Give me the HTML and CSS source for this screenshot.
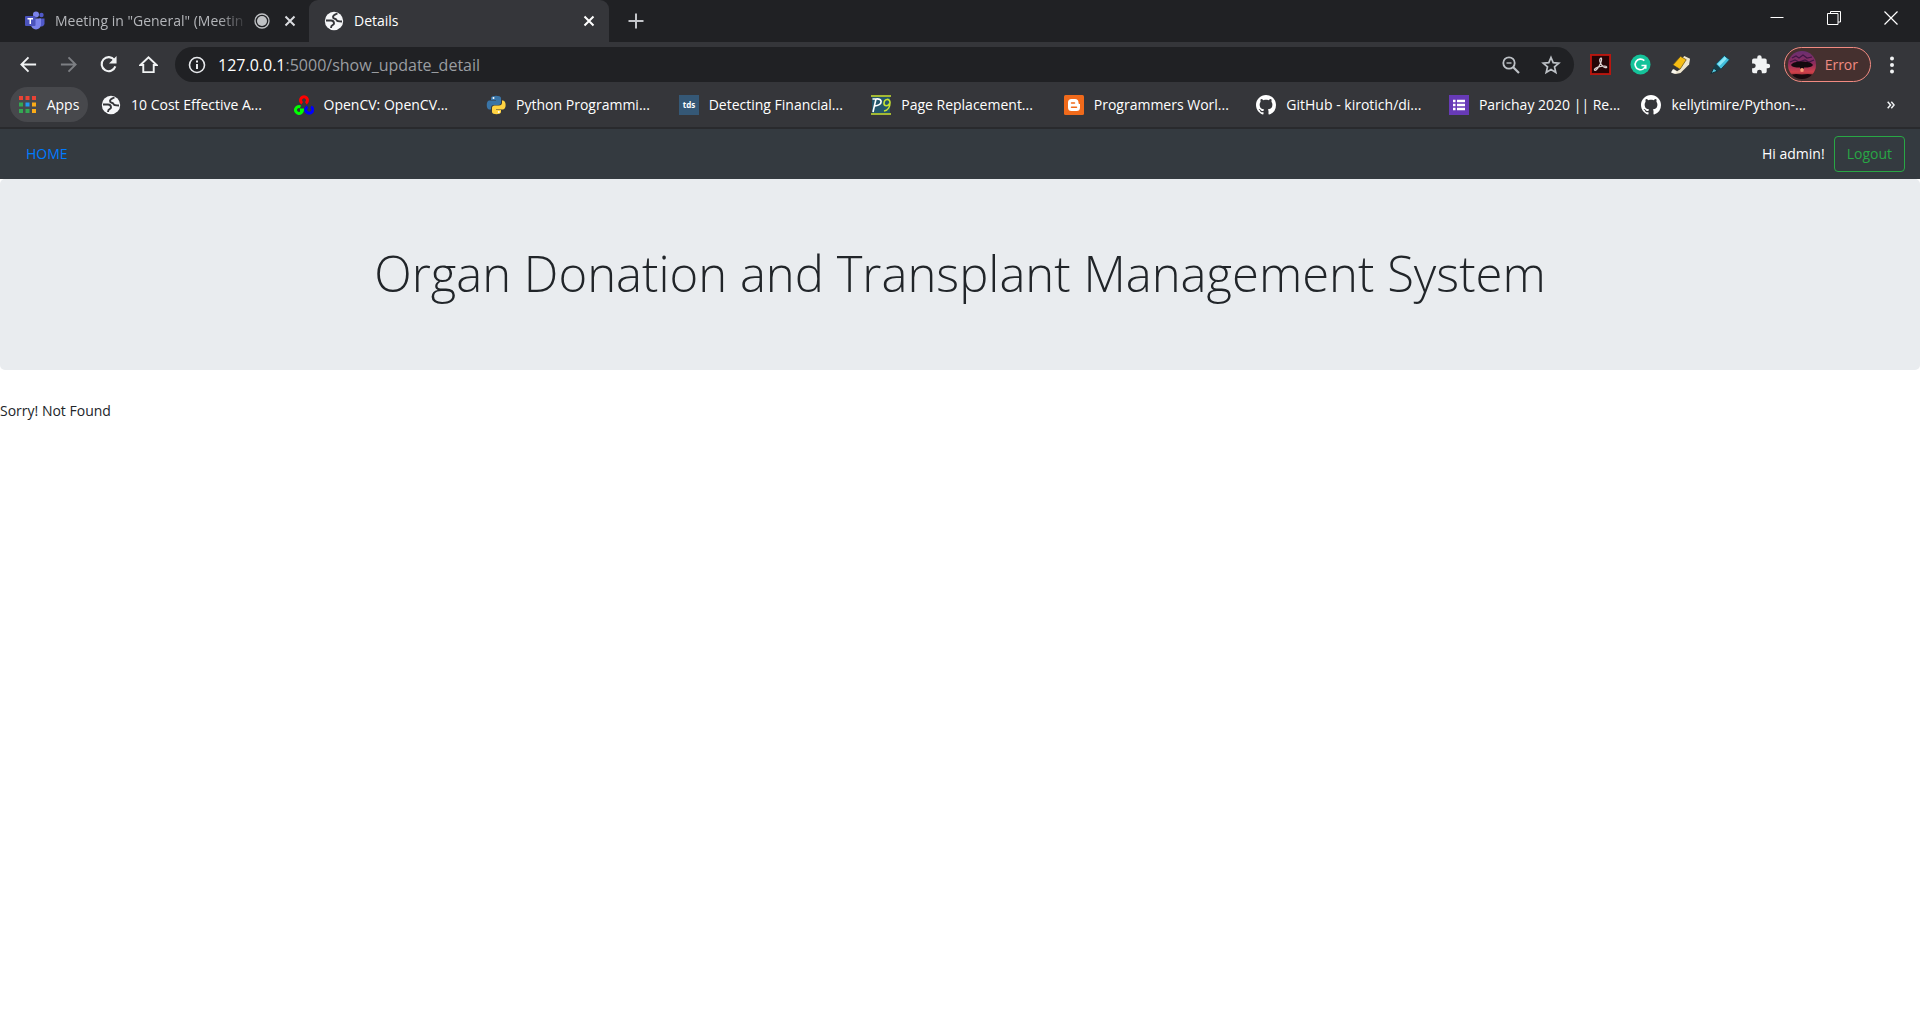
FILE: index.html
```html
<!DOCTYPE html>
<html lang="en">
<head>
<meta charset="utf-8">
<title>Details</title>
<link rel="stylesheet" href="styles.css">
</head>
<body>
<svg class="defs" width="0" height="0" aria-hidden="true">
  <symbol id="globe" viewBox="0 0 20 20"><circle cx="10" cy="10" r="9.200" fill="#f5f6f8"/><path d="M13.500 2.500C10 4 9 4 9 6c0 2.500 3 1 3.500 3 .3 1.500 2 1.500 5.500 1.500" fill="none" stroke="#35363a" stroke-width="1.900"/><path d="M2 9.500h5c2 0 3 1 3 3s-3 .5-3 4.500" fill="none" stroke="#35363a" stroke-width="1.900"/></symbol>
  <symbol id="github" viewBox="0 0 16 16"><path fill="#fff" d="M8 0C3.580 0 0 3.580 0 8c0 3.540 2.290 6.530 5.470 7.590.4.070.55-.17.55-.38 0-.19-.01-.82-.01-1.490-2.010.37-2.530-.49-2.690-.94-.09-.23-.48-.94-.82-1.130-.28-.15-.68-.52-.01-.53.63-.01 1.080.58 1.230.82.72 1.210 1.870.87 2.330.66.070-.52.280-.87.510-1.070-1.780-.2-3.640-.89-3.640-3.950 0-.87.310-1.590.82-2.150-.08-.2-.36-1.020.08-2.120 0 0 .67-.21 2.200.82.640-.18 1.320-.27 2-.27s1.360.09 2 .27c1.530-1.040 2.200-.82 2.200-.82.440 1.100.160 1.920.080 2.120.510.560.820 1.270.820 2.150 0 3.070-1.870 3.750-3.650 3.950.290.250.540.730.540 1.480 0 1.070-.01 1.930-.01 2.200 0 .21.150.46.550.38A8.010 8.010 0 0 0 16 8c0-4.420-3.580-8-8-8z"/></symbol>
</svg>

<header class="browser">
  <div class="tabstrip">
    <div class="tab">
      <svg class="icon" viewBox="0 0 20 20"><circle cx="16.500" cy="4" r="2.200" fill="#5059c9"/><circle cx="11" cy="3.500" r="3" fill="#7b83eb"/><path d="M14 7.500h5.500v5.500a3 3 0 0 1-5.500 1z" fill="#5059c9"/><path d="M6 7.500h10v6a5 5 0 0 1-10 0z" fill="#7b83eb"/><rect y="5" width="10.500" height="10" rx="1" fill="#4b53bc"/><path d="M2.500 7.700h5.500M5.250 7.700v5.300" stroke="#fff" stroke-width="1.500"/></svg>
      <span class="tab-title fade">Meeting in "General" (Meetin</span>
      <svg class="record" viewBox="0 0 16 16"><circle cx="8" cy="8" r="7" fill="none" stroke="#c0c2c5" stroke-width="1.300"/><circle cx="8" cy="8" r="5" fill="#c0c2c5"/></svg>
      <button class="close" aria-label="Close tab"><svg viewBox="0 0 12 12"><path d="M1.500 1.500l9 9m0-9l-9 9" stroke="#dadce0" stroke-width="2"/></svg></button>
    </div>
    <div class="tab active">
      <svg class="icon"><use href="#globe"/></svg>
      <span class="tab-title">Details</span>
      <button class="close" aria-label="Close tab"><svg viewBox="0 0 12 12"><path d="M1.500 1.500l9 9m0-9l-9 9" stroke="#fff" stroke-width="2"/></svg></button>
    </div>
    <button class="new-tab" aria-label="New tab"><svg viewBox="0 0 16 16"><path d="M8 .5v15M.5 8h15" stroke="#c4c6ca" stroke-width="2"/></svg></button>
    <div class="window-controls">
      <button aria-label="Minimize"><svg viewBox="0 0 14 14"><path d="M.5 6.500h13" stroke="#fff"/></svg></button>
      <button aria-label="Restore"><svg viewBox="0 0 14 14"><path d="M.5 2.500h10.500v11H.5zM3.500 2.500v-2h10v10.500h-2.500" fill="none" stroke="#fff"/></svg></button>
      <button aria-label="Close"><svg viewBox="0 0 14 14"><path d="M.5.5l13 13m0-13l-13 13" stroke="#fff" stroke-width="1.200"/></svg></button>
    </div>
  </div>

  <div class="toolbar">
    <div class="nav-buttons">
      <button aria-label="Back"><svg viewBox="0 0 20 20"><path d="M18 10H3M10 2.500L2.500 10l7.500 7.500" fill="none" stroke="#f1f3f4" stroke-width="2"/></svg></button>
      <button aria-label="Forward"><svg viewBox="0 0 20 20"><path d="M2 10h15M10 2.500l7.500 7.500-7.500 7.500" fill="none" stroke="#7d7f83" stroke-width="2"/></svg></button>
      <button aria-label="Reload"><svg viewBox="0 0 20 20"><path d="M16.200 5.300A7.400 7.400 0 1 0 17.200 12" fill="none" stroke="#f1f3f4" stroke-width="2.200"/><path d="M18.500 1v8h-8z" fill="#f1f3f4"/></svg></button>
      <button aria-label="Home"><svg viewBox="0 0 20 20"><path d="M1.500 10.500L10 2.500l8.500 8h-3V18h-11v-7.500z" fill="none" stroke="#f1f3f4" stroke-width="2"/></svg></button>
    </div>
    <form class="omnibox">
      <svg class="icon" viewBox="0 0 20 20"><circle cx="10" cy="10" r="7.500" fill="none" stroke="#e8eaed" stroke-width="1.600"/><path d="M10 9v5M10 5.500v2" stroke="#e8eaed" stroke-width="2"/></svg>
      <div class="url"><span class="host">127.0.0.1</span>:5000/show_update_detail</div>
      <button type="button" aria-label="Zoom"><svg viewBox="0 0 20 20"><circle cx="8" cy="8" r="5.700" fill="none" stroke="#bdc1c6" stroke-width="1.800"/><path d="M12 12l6 6" stroke="#bdc1c6" stroke-width="2.200"/><path d="M5.500 8h5" stroke="#bdc1c6" stroke-width="1.400"/></svg></button>
      <button type="button" aria-label="Bookmark this tab"><svg viewBox="0 0 20 20"><path d="M10 2.500l2.200 5.200 5.600.5-4.300 3.700 1.300 5.500L10 14.500l-4.800 2.900 1.300-5.500-4.300-3.700 5.600-.5z" fill="none" stroke="#bdc1c6" stroke-width="1.700"/></svg></button>
    </form>
    <div class="extensions">
      <button aria-label="Adobe Acrobat"><svg viewBox="0 0 22 22"><rect x="1" y="1" width="20" height="20" fill="#250507" stroke="#b9160f" stroke-width="2"/><path d="M5 17c-1.500-1 2-3 5-3.700s7-.8 7.500.3-3 1.200-5-1.600-3-6-1.500-7.500 1.500 2.500 0 5.500-4.500 8-6 7z" fill="none" stroke="#ddd3d3" stroke-width="1.300"/></svg></button>
      <button aria-label="Grammarly"><svg viewBox="0 0 22 22"><circle cx="11" cy="11" r="10.500" fill="#15c39a"/><path d="M15 7a5.600 5.600 0 1 0 1.500 5H12m4.500 0v3.500" fill="none" stroke="#fff" stroke-width="1.700"/></svg></button>
      <button aria-label="Highlighter"><svg viewBox="0 0 22 22"><path d="M2 20l2-5L15 2l6 3-1 6-9 9-5 1z" fill="#eee6cf"/><path d="M3 11.500L11 2.500l6 3.500-6.500 10z" fill="#f6bd13" stroke="#6b5417" stroke-width=".8"/><path d="M3 11.500L2.500 15l5 3 3-2z" fill="#353535"/><path d="M1 19.500l2-3.500 4 2.500-2 2z" fill="#faf8ef"/></svg></button>
      <button aria-label="Marker"><svg viewBox="0 0 22 22"><path d="M1 20.500l3-6 3.500 3.500z" fill="#54c5dc" stroke="#102d36"/><path d="M3 15l3-4.500 5.500 5L7.500 18z" fill="#163d48"/><path d="M6 10.500L15 1.500l5.500 4.500L11.500 16z" fill="#42bfdc" stroke="#123947"/><path d="M8 10.500L15.500 3l2 2L10 12.500z" fill="#8ce6f5"/></svg></button>
      <button aria-label="Extensions"><svg viewBox="0 0 22 22"><path d="M18.800 10.200h-1.300V6.500a1.800 1.800 0 0 0-1.800-1.800h-3.500V3.500a2.300 2.300 0 0 0-4.600 0v1.200H4a1.800 1.800 0 0 0-1.800 1.800v3.400h1.300a2.500 2.500 0 0 1 0 5H2.200v3.500A1.800 1.800 0 0 0 4 20.200h3.400v-1.300a2.500 2.500 0 0 1 5 0v1.300h3.300a1.800 1.800 0 0 0 1.800-1.800v-3.600h1.300a2.300 2.300 0 0 0 0-4.600z" fill="#f1f3f4"/></svg></button>
    </div>
    <button class="profile">
      <svg viewBox="0 0 28 28"><defs><clipPath id="avatar"><circle cx="14" cy="14" r="14"/></clipPath><linearGradient id="sky" x1="0" y1="0" x2="0" y2="1"><stop offset="0" stop-color="#6a2f72"/><stop offset=".45" stop-color="#8e2c5c"/><stop offset=".75" stop-color="#d2414a"/><stop offset="1" stop-color="#4a1522"/></linearGradient></defs><g clip-path="url(#avatar)"><path fill="url(#sky)" d="M0 0h28v28H0z"/><path d="M4 7l4-2 3 2 4-3 4 3 5-1M2 11l5-2 4 2 6-2 4 2 5-2" fill="none" stroke="#401744" stroke-width="1.200"/><path fill="#12090e" d="M3 14c2-3 6-3.500 11-3.500S23 11 25 14c-1 2-4 2.500-9 2.500V20h-4v-3.500c-5 0-8-.5-9-2.500z"/><circle cx="14" cy="19" r="2" fill="#ff9a78"/><path fill="#180a0e" d="M0 24l8-1 6 .5 6-.5 8 1v4H0z"/></g></svg>
      <span>Error</span>
    </button>
    <button class="menu" aria-label="Menu"><svg viewBox="0 0 6 18"><circle cx="3" cy="2.500" r="2" fill="#f1f3f4"/><circle cx="3" cy="9" r="2" fill="#f1f3f4"/><circle cx="3" cy="15.500" r="2" fill="#f1f3f4"/></svg></button>
  </div>

  <nav class="bookmarks" aria-label="Bookmarks">
    <a class="apps" href="#"><svg viewBox="0 0 17 17"><path fill="#ea4335" d="M0 0h4v4H0zM6.500 0h4v4h-4zM13 0h4v4h-4z"/><path fill="#34a853" d="M0 6.500h4v4H0zM0 13h4v4H0z"/><path fill="#2196f3" d="M6.500 6.500h4v4h-4z"/><path fill="#34a853" d="M6.500 13h4v4h-4z"/><path fill="#fbab17" d="M13 6.500h4v4h-4zM13 13h4v4h-4z"/></svg><span>Apps</span></a>
    <div class="bookmark-list">
      <a href="#"><svg class="icon"><use href="#globe"/></svg><span>10 Cost Effective A...</span></a>
      <a href="#"><svg class="icon" viewBox="0 0 20 20"><g fill="none" stroke-width="3"><path d="M8.200 8.200a3.500 3.500 0 1 1 3.600 0" stroke="#f00"/><path d="M6.500 11.800a3.500 3.500 0 1 0 2 3.200H6" stroke="#0f0"/><path d="M13.500 11.800a3.500 3.500 0 1 0 3.500 0" stroke="#00f"/></g></svg><span>OpenCV: OpenCV...</span></a>
      <a href="#"><svg class="icon" viewBox="0 0 20 20"><path d="M5 5V3c0-3 10-3 10 0v4.500c0 1.500-1 2.500-2.500 2.500H8c-2 0-3 1-3 3v1.500H3C0 14.500 0 5.500 3 5.500h7V5z" fill="#3974a6"/><path d="M15 15v2c0 3-9 3-9 0v-4c0-1.500 1-2.500 2.500-2.500H13c2 0 3-1 3-3V5.500h1c3.500 0 3.500 9 0 9h-7v.5z" fill="#ffd342"/><circle cx="7.500" cy="3" r="1" fill="#fff"/><circle cx="12.800" cy="17" r="1" fill="#fff"/></svg><span>Python Programmi...</span></a>
      <a href="#"><svg class="icon" viewBox="0 0 20 20"><path fill="#355876" d="M0 0h20v20H0z"/><text class="tds" x="10" y="13" text-anchor="middle">tds</text></svg><span>Detecting Financial...</span></a>
      <a href="#"><svg class="icon" viewBox="0 0 20 20"><path fill="#23566b" d="M1 2h18v16H1z"/><path d="M0 1h20M0 19h20" stroke="#c9e532" stroke-width="1.500"/><path d="M2 17L5 4H1.500M5 4c7-1 7 6-1 7" fill="none" stroke="#fff" stroke-width="1.600"/><path d="M18.500 8.500c-1 3-5.500 3-5.500 0 0-5 6-5.500 6-1 0 4-2 8-6 8.500" fill="none" stroke="#c9e532" stroke-width="1.600"/></svg><span>Page Replacement...</span></a>
      <a href="#"><svg class="icon" viewBox="0 0 20 20"><rect width="20" height="20" rx="1.500" fill="#f06a1b"/><path d="M7.500 4h3.500a3.500 3.500 0 0 1 3.500 3.500c0 1 .3 1.500 1.500 1.500v3.500a3.500 3.500 0 0 1-3.500 3.500h-5A3.500 3.500 0 0 1 4 12.500v-5A3.500 3.500 0 0 1 7.500 4z" fill="#fff"/><path d="M7.500 8h3M7.500 12.300h5" stroke="#f06a1b" stroke-width="1.500" stroke-linecap="round"/></svg><span>Programmers Worl...</span></a>
      <a href="#"><svg class="icon"><use href="#github"/></svg><span>GitHub - kirotich/di...</span></a>
      <a href="#"><svg class="icon" viewBox="0 0 20 20"><path fill="#673ab7" d="M0 0h20v20H0z"/><path d="M4 6h2.500M4 10h2.500M4 14h2.500M8 6h8M8 10h8M8 14h8" stroke="#fff" stroke-width="2.300"/></svg><span>Parichay 2020 || Re...</span></a>
      <a href="#"><svg class="icon"><use href="#github"/></svg><span>kellytimire/Python-...</span></a>
    </div>
    <button class="more" aria-label="More bookmarks"><svg viewBox="0 0 8 8"><path d="M.7.8L3.500 4 .7 7.200M4.300.8L7.100 4 4.300 7.200" fill="none" stroke="#f1f3f4" stroke-width="1.500"/></svg></button>
  </nav>
</header>

<nav class="navbar">
  <a class="home" href="#">HOME</a>
  <span class="greeting">Hi admin!</span>
  <button class="logout">Logout</button>
</nav>
<main>
  <section class="jumbotron"><h1>Organ Donation and Transplant Management System</h1></section>
  <p class="message">Sorry! Not Found</p>
</main>
</body>
</html>
```

FILE: styles.css
```css
* { box-sizing: border-box; }
body {
  margin: 0;
  background: #fff;
  color: #212529;
  font: 14px/22px "Open Sans", "Noto Sans", sans-serif;
}
button { padding: 0; border: 0; background: none; color: inherit; font: inherit; }
button, a { display: flex; align-items: center; justify-content: center; flex: none; text-decoration: none; }
svg { display: block; flex: none; }
.defs { position: absolute; }
.icon { width: 20px; height: 20px; }

/* Browser frame */
.browser { background: #35363a; color: #fff; border-bottom: 2px solid #292a2d; }
.tabstrip { display: flex; height: 42px; background: #202124; }
.tab { display: flex; align-items: center; width: 309px; padding: 0 11px 0 25px; color: #b4b6ba; }
.tab.active { width: 300px; padding: 0 12px 0 15px; background: #35363a; border-radius: 9px 9px 0 0; color: #fff; }
.tab-title { flex: 1; min-width: 0; margin-left: 10px; white-space: nowrap; }
.fade { mask-image: linear-gradient(to right, #000 85%, transparent); }
.record { width: 16px; height: 16px; margin-left: 6px; }
.close { width: 16px; height: 16px; margin-left: 12px; }
.close svg { width: 12px; height: 12px; }
.new-tab { width: 54px; }
.new-tab svg { width: 16px; height: 16px; }
.window-controls { display: flex; height: 36px; margin-left: auto; padding-right: 1px; }
.window-controls button { width: 57px; }
.window-controls svg { width: 14px; height: 14px; }

.toolbar { display: flex; align-items: center; height: 45px; padding: 0 18px 0 8px; }
.nav-buttons { display: flex; margin-right: 7px; }
.nav-buttons button { width: 40px; height: 40px; }
.nav-buttons svg { width: 19px; height: 19px; }
.omnibox { display: flex; flex: 1; align-items: center; height: 35px; padding: 0 3px 0 12px; border-radius: 18px; background: #202124; }
.url { flex: 1; margin-left: 11px; color: #9a9da1; font-size: 16px; }
.host { color: #fff; }
.omnibox button { width: 40px; height: 35px; }
.omnibox button svg { width: 20px; height: 20px; }
.extensions { display: flex; margin-left: 7px; }
.extensions button { width: 40px; height: 40px; }
.extensions svg { width: 21px; height: 21px; }
.profile { height: 35px; margin-left: 3px; padding: 0 12px 0 3px; gap: 9px; border: 1px solid #f28b82; border-radius: 18px; background: #45302f; color: #f28b82; }
.profile svg { width: 28px; height: 28px; }
.menu { width: 20px; height: 35px; margin-left: 11px; }
.menu svg { width: 6px; height: 18px; }

.bookmarks { display: flex; height: 40px; padding: 0 21px 5px 10px; }
.apps { width: 78px; gap: 11px; border-radius: 18px; background: #47484c; color: #fff; }
.apps svg { width: 17px; height: 17px; }
.bookmark-list { display: grid; flex: 1; grid-template-columns: repeat(9, minmax(0, 1fr)); margin: 0 49px 0 13px; }
.bookmark-list a { justify-content: flex-start; gap: 10px; color: #fff; white-space: nowrap; }
.tds { fill: #fff; font: bold 8px "Open Sans", sans-serif; }
.more { width: 16px; }
.more svg { width: 8px; height: 8px; }

/* Page */
.navbar { display: flex; align-items: center; height: 50px; padding: 0 15px 0 26px; background: #343a40; }
.home { color: #007bff; }
.greeting { margin-left: auto; color: #fff; }
.logout { height: 36px; margin-left: 9px; padding: 0 12px; border: 1px solid #28a745; border-radius: 4px; color: #28a745; }
.jumbotron { padding: 61px 32px 64px; border-radius: 5px; background: #e9ecef; text-align: center; }
h1 { margin: 0; font-size: 49px; font-weight: 300; line-height: 66px; }
.message { margin: 30px 0 0; }
```
